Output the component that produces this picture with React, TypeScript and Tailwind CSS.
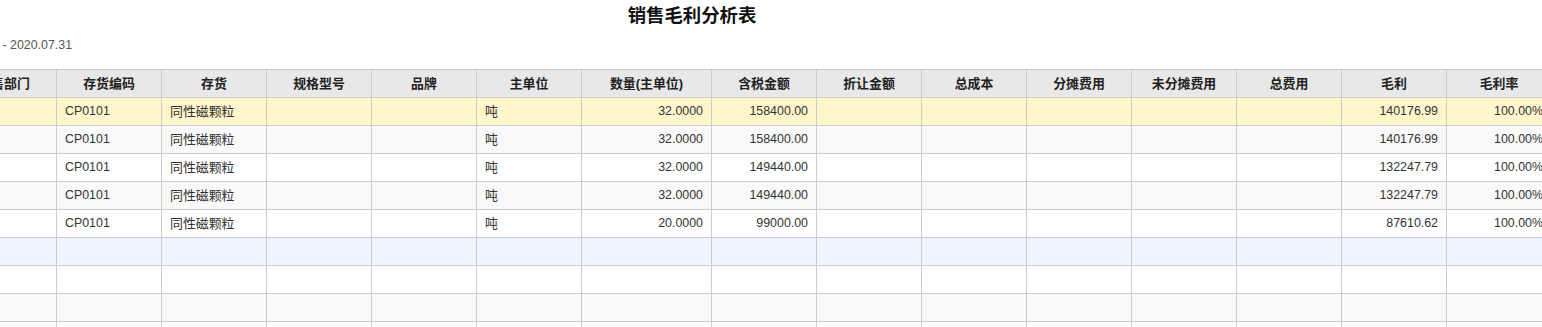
const columns = [
  { key: 'dept', title: '销售部门', width: 'w-[105px]', align: 'left' },
  { key: 'code', title: '存货编码', width: 'w-[105px]', align: 'left' },
  { key: 'item', title: '存货', width: 'w-[105px]', align: 'left' },
  { key: 'spec', title: '规格型号', width: 'w-[105px]', align: 'left' },
  { key: 'brand', title: '品牌', width: 'w-[105px]', align: 'left' },
  { key: 'unit', title: '主单位', width: 'w-[105px]', align: 'left' },
  { key: 'qty', title: '数量(主单位)', width: 'w-[130px]', align: 'right' },
  { key: 'amount', title: '含税金额', width: 'w-[105px]', align: 'right' },
  { key: 'discount', title: '折让金额', width: 'w-[105px]', align: 'right' },
  { key: 'cost', title: '总成本', width: 'w-[105px]', align: 'right' },
  { key: 'shared', title: '分摊费用', width: 'w-[105px]', align: 'right' },
  { key: 'unshared', title: '未分摊费用', width: 'w-[105px]', align: 'right' },
  { key: 'fee', title: '总费用', width: 'w-[105px]', align: 'right' },
  { key: 'profit', title: '毛利', width: 'w-[105px]', align: 'right' },
  { key: 'rate', title: '毛利率', width: 'w-[105px]', align: 'right' },
];

// text columns holding Chinese render a touch larger in the source
const cjkCols = ['item', 'unit'];

type Row = Record<string, string>;

const item = (qty: string, amount: string, profit: string): Row => ({
  code: 'CP0101',
  item: '同性磁颗粒',
  unit: '吨',
  qty,
  amount,
  profit,
  rate: '100.00%',
});

const rows: Row[] = [
  item('32.0000', '158400.00', '140176.99'),
  item('32.0000', '158400.00', '140176.99'),
  item('32.0000', '149440.00', '132247.79'),
  item('32.0000', '149440.00', '132247.79'),
  item('20.0000', '99000.00', '87610.62'),
  {},
  {},
  {},
  {},
];

function rowBg(i: number) {
  if (i === 0) return 'bg-[#fff6cc]';
  if (i === 5) return 'bg-[#eef5fe]';
  return i % 2 === 1 ? 'bg-[#f9f9f9]' : 'bg-white';
}

export default function App() {
  return (
    <div className="w-[1542px] h-[327px] overflow-hidden bg-white text-[#333] font-['Liberation_Sans','Noto_Sans_CJK_SC',sans-serif]">
      <div className="w-[1384px] pt-[2px] text-center text-[18.4px] leading-[24px] font-bold text-[#111] font-['Noto_Sans_CJK_SC',sans-serif]">
        销售毛利分析表
      </div>
      <div className="-ml-[63px] mt-[11px] h-[16px] text-[12.4px] leading-[16px] text-[#555]">
        2020.07.01 - 2020.07.31
      </div>
      <div className="-ml-[48px] mt-[16px]">
        <div className="flex border-y border-[#cccccc] bg-[#e8e8e8]">
          {columns.map((c) => (
            <div
              key={c.key}
              className={`${c.width} shrink-0 h-[27px] border-r border-[#cccccc] flex items-center justify-center text-[12.9px] font-bold text-[#222] whitespace-nowrap`}
            >
              {c.title}
            </div>
          ))}
        </div>
        {rows.map((r, i) => (
          <div key={i} className={`flex border-b border-[#cccccc] ${rowBg(i)}`}>
            {columns.map((c) => (
              <div
                key={c.key}
                className={`${c.width} shrink-0 h-[27px] border-r border-[#cccccc] px-2 flex items-center whitespace-nowrap ${
                  cjkCols.includes(c.key) ? 'text-[12.9px]' : 'text-[12.4px]'
                } ${c.align === 'right' ? 'justify-end' : 'justify-start'}`}
              >
                {r[c.key] ?? ''}
              </div>
            ))}
          </div>
        ))}
      </div>
    </div>
  );
}
